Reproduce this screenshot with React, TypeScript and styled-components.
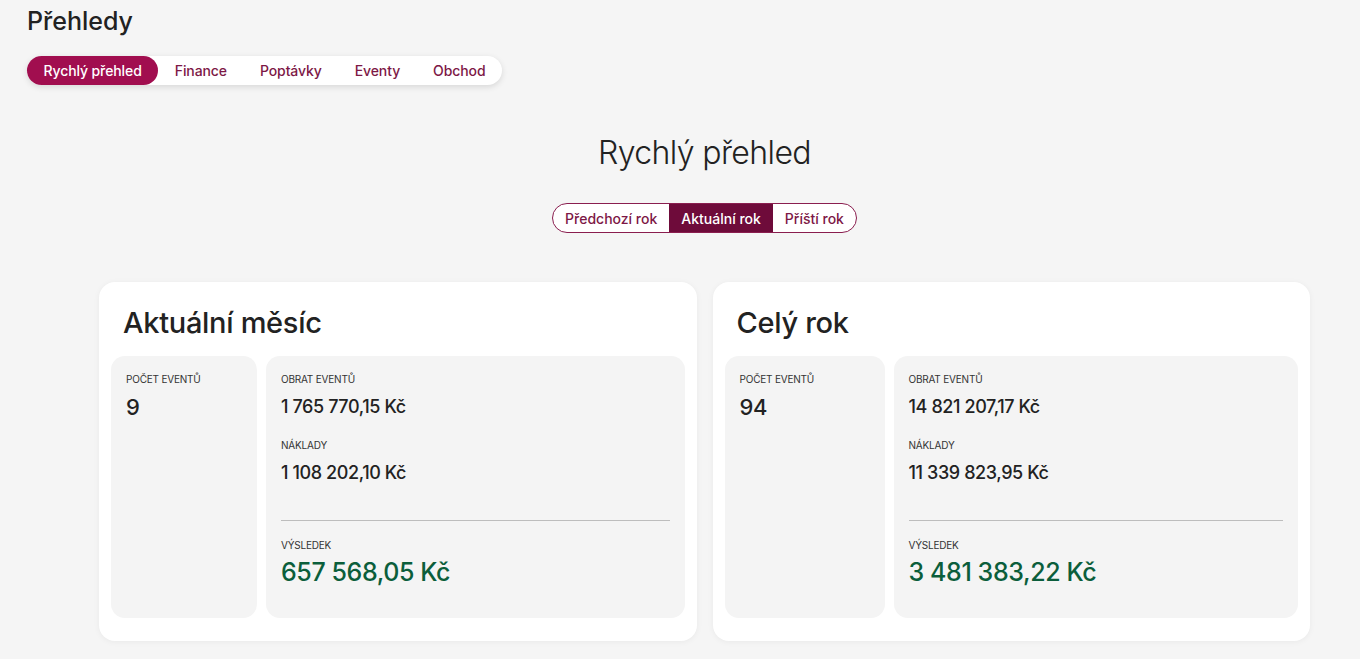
import styled, { createGlobalStyle } from 'styled-components';

const GlobalStyle = createGlobalStyle`
  * {
    box-sizing: border-box;
  }

  body {
    margin: 0;
    background: #f5f5f5;
    font-family: Inter, 'Noto Sans', sans-serif;
    color: #222;
  }
`;

const Page = styled.div`
  padding: 4px 50px 18px 27px;
  display: flex;
  flex-direction: column;
`;

const PageTitle = styled.h1`
  margin: 0;
  font-size: 25px;
  line-height: 34px;
  font-weight: 500;
  color: #222;
`;

const Tabs = styled.nav`
  margin-top: 18px;
  align-self: flex-start;
  display: flex;
  height: 29px;
  background: #fff;
  border-radius: 999px;
  box-shadow: 0 2px 6px rgba(0, 0, 0, 0.12);
`;

const Tab = styled.button<{ $active?: boolean }>`
  border: 0;
  padding: 0 16.5px;
  border-radius: 999px;
  font-family: inherit;
  font-size: 14px;
  font-weight: 500;
  letter-spacing: -0.1px;
  background: ${(p) => (p.$active ? '#a10e4f' : 'transparent')};
  color: ${(p) => (p.$active ? '#fff' : '#7d1846')};
  cursor: pointer;
`;

const Main = styled.main`
  margin-left: 72px;
  display: flex;
  flex-direction: column;
  align-items: center;
`;

const Heading = styled.h2`
  margin: 44px 0 0;
  font-size: 32px;
  line-height: 48px;
  font-weight: 300;
  letter-spacing: -0.6px;
  color: #222;
`;

const YearSwitch = styled.div`
  margin-top: 26px;
  display: flex;
  height: 30px;
  border: 1px solid #8a1e4f;
  border-radius: 15px;
  overflow: hidden;
  background: #fff;
`;

const YearButton = styled.button<{ $active?: boolean }>`
  border: 0;
  padding: 0 12px;
  font-family: inherit;
  font-size: 14px;
  font-weight: 500;
  background: ${(p) => (p.$active ? '#6e0b3a' : 'transparent')};
  color: ${(p) => (p.$active ? '#fff' : '#7d1846')};
  cursor: pointer;
`;

const Cards = styled.div`
  margin-top: 49px;
  width: 100%;
  display: grid;
  grid-template-columns: 1fr 1fr;
  gap: 16px;
`;

const Card = styled.section`
  background: #fff;
  border-radius: 16px;
  padding: 21px 12px 23px;
  box-shadow: 0 1px 6px rgba(0, 0, 0, 0.05);
`;

const CardTitle = styled.h3`
  margin: 0 0 13px;
  padding: 0 12px;
  font-size: 29px;
  line-height: 40px;
  font-weight: 500;
  letter-spacing: -0.3px;
  color: #222;
`;

const Boxes = styled.div`
  display: flex;
  gap: 9px;
  height: 262px;
`;

const Box = styled.div<{ $width?: number }>`
  ${(p) => (p.$width ? `flex: 0 0 ${p.$width}px;` : 'flex: 1;')}
  background: #f4f4f4;
  border-radius: 14px;
  padding: 17px 15px;
  display: flex;
  flex-direction: column;
`;

const Field = styled.div`
  & + & {
    margin-top: 20px;
  }
`;

const Label = styled.div`
  font-size: 10px;
  line-height: 12px;
  text-transform: uppercase;
  color: #333;
  letter-spacing: -0.2px;
`;

const Value = styled.div<{ $size: number; $green?: boolean }>`
  margin-top: ${(p) => (p.$size > 24 ? 6 : 10)}px;
  font-size: ${(p) => p.$size}px;
  line-height: ${(p) => (p.$size > 24 ? 30 : 24)}px;
  font-weight: 500;
  color: ${(p) => (p.$green ? '#0b5e3b' : '#222')};
  letter-spacing: -0.4px;
`;

const Divider = styled.hr`
  margin: 35px 0 18px;
  border: 0;
  border-top: 1px solid #bdbdbd;
`;

type Summary = {
  title: string;
  count: string;
  revenue: string;
  costs: string;
  result: string;
  countWidth: number;
};

const summaries: Summary[] = [
  {
    title: 'Aktuální měsíc',
    count: '9',
    revenue: '1 765 770,15 Kč',
    costs: '1 108 202,10 Kč',
    result: '657 568,05 Kč',
    countWidth: 146,
  },
  {
    title: 'Celý rok',
    count: '94',
    revenue: '14 821 207,17 Kč',
    costs: '11 339 823,95 Kč',
    result: '3 481 383,22 Kč',
    countWidth: 160,
  },
];

function SummaryCard({ data }: { data: Summary }) {
  return (
    <Card>
      <CardTitle>{data.title}</CardTitle>
      <Boxes>
        <Box $width={data.countWidth}>
          <Label>Počet eventů</Label>
          <Value $size={22}>{data.count}</Value>
        </Box>
        <Box>
          <Field>
            <Label>Obrat eventů</Label>
            <Value $size={18}>{data.revenue}</Value>
          </Field>
          <Field>
            <Label>Náklady</Label>
            <Value $size={18}>{data.costs}</Value>
          </Field>
          <Divider />
          <Label>Výsledek</Label>
          <Value $size={25} $green>
            {data.result}
          </Value>
        </Box>
      </Boxes>
    </Card>
  );
}

export default function App() {
  return (
    <>
      <GlobalStyle />
      <Page>
        <PageTitle>Přehledy</PageTitle>
        <Tabs>
          <Tab $active>Rychlý přehled</Tab>
          <Tab>Finance</Tab>
          <Tab>Poptávky</Tab>
          <Tab>Eventy</Tab>
          <Tab>Obchod</Tab>
        </Tabs>
        <Main>
          <Heading>Rychlý přehled</Heading>
          <YearSwitch>
            <YearButton>Předchozí rok</YearButton>
            <YearButton $active>Aktuální rok</YearButton>
            <YearButton>Příští rok</YearButton>
          </YearSwitch>
          <Cards>
            {summaries.map((s) => (
              <SummaryCard key={s.title} data={s} />
            ))}
          </Cards>
        </Main>
      </Page>
    </>
  );
}
